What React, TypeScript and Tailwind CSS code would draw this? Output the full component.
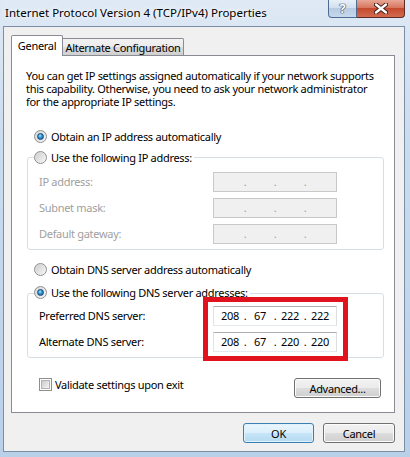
import React from "react";

const FONT = { fontFamily: '"Noto Sans", "Open Sans", sans-serif' };

function Radio({ checked }: { checked?: boolean }) {
  return (
    <span className="w-[13px] h-[13px] rounded-full border border-[#8e8f8f] bg-[linear-gradient(135deg,#d4d4d4,#f7f7f7)] flex items-center justify-center shrink-0">
      {checked ? (
        <span className="w-[7px] h-[7px] rounded-full bg-[radial-gradient(circle_at_40%_35%,#b9ecff_0%,#3aa0e0_35%,#0f4f8c_100%)] border border-[#1d4a7a]" />
      ) : (
        <span className="w-[9px] h-[9px] rounded-full bg-[linear-gradient(135deg,#cfcfcf,#f4f4f4)]" />
      )}
    </span>
  );
}

function IpField({ values, disabled }: { values?: string[]; disabled?: boolean }) {
  const segs = values ?? ["", "", "", ""];
  return (
    <div
      className={
        "w-[124px] h-[20px] border flex items-center pl-[3px] " +
        (disabled
          ? "bg-[#f0f0f0] border-[#c9c9c9] text-[#a0a0a0]"
          : "bg-white border-[#abadb3] border-b-[#e3e9ef] border-l-[#e2e3ea] border-r-[#dbdfe6] text-black")
      }
    >
      {segs.map((s, i) => (
        <React.Fragment key={i}>
          <span className="w-[26px] text-center leading-[18px]">{s}</span>
          {i < 3 && <span className="w-[4px] text-center leading-[18px]">.</span>}
        </React.Fragment>
      ))}
    </div>
  );
}

function Btn({ children, def, w }: { children: React.ReactNode; def?: boolean; w: string }) {
  return (
    <div
      className={
        w +
        " h-[20px] rounded-[3px] border flex items-center justify-center leading-none " +
        (def
          ? "border-[#3c7fb1] bg-[linear-gradient(#eaf6fd,#dbeffb_50%,#c8e6f8_50%,#b3d9f1)] shadow-[inset_0_0_0_1px_#dff2fd]"
          : "border-[#707070] bg-[linear-gradient(#f2f2f2,#ebebeb_50%,#dddddd_50%,#cfcfcf)] shadow-[inset_0_0_0_1px_#fcfcfc]")
      }
    >
      {children}
    </div>
  );
}

export default function App() {
  return (
    <div
      style={FONT}
      className="w-[410px] h-[457px] flex flex-col pl-[3px] pr-[5px] pb-[5px] bg-[linear-gradient(180deg,#dfe9f5_0%,#cadcef_30%,#b9d0e9_100%)] text-[11px] tracking-[-0.3px] text-black whitespace-nowrap"
    >
      {/* Title bar */}
      <div className="h-[26px] flex items-start justify-between shrink-0">
        <div className="pl-[2px] pt-[4px] leading-[18px] text-[11.5px] tracking-normal text-black [text-shadow:0_0_8px_#ffffff,0_0_4px_#ffffff]">
          Internet Protocol Version 4 (TCP/IPv4) Properties
        </div>
        <div className="flex items-start">
          <div className="w-[29px] h-[18px] rounded-bl-[4px] border border-t-0 border-[#4f6d92] bg-[linear-gradient(#e8eff8,#d3e0ef_45%,#b7cbe3_50%,#c6d8ec)] flex items-center justify-center">
            <span className="text-[13px] font-bold leading-none text-white [text-shadow:0_0_1px_#20344f,0_0_1px_#20344f,0_0_1px_#20344f]">?</span>
          </div>
          <div className="w-[48px] h-[18px] rounded-br-[4px] border border-t-0 border-l-0 border-[#5e2a24] bg-[linear-gradient(#e7a796,#d8765f_45%,#c34a2f_50%,#d36a4f)] flex items-center justify-center">
            <svg width="14" height="11" viewBox="0 0 14 11">
              <path d="M2 1.5 L12 9.5 M12 1.5 L2 9.5" stroke="#3b1a16" strokeWidth="4.2" strokeLinecap="round" />
              <path d="M2 1.5 L12 9.5 M12 1.5 L2 9.5" stroke="#ffffff" strokeWidth="2.4" strokeLinecap="round" />
            </svg>
          </div>
        </div>
      </div>

      {/* Client area */}
      <div className="flex-1 bg-[#f0f0f0] border border-[#7b8ea6] flex flex-col pl-[7px] pr-[9px] pt-[8px]">
        {/* Tabs */}
        <div className="h-[20px] flex items-end">
          <div className="relative z-10 h-[21px] -mb-[1px] w-[52px] bg-white border border-b-0 border-[#898c95] rounded-t-[2px] flex items-start justify-center pt-[2px] leading-[15px]">
            General
          </div>
          <div className="h-[17px] w-[121px] border border-l-0 border-b-0 border-[#898c95] rounded-tr-[2px] bg-[linear-gradient(#f2f2f2,#ebebeb_50%,#dddddd_50%,#cfcfcf)] flex items-center justify-center leading-[15px]">
            Alternate Configuration
          </div>
        </div>

        {/* Panel */}
        <div className="h-[358px] bg-white border border-[#898c95] flex flex-col pl-[14px] pr-[10px] pt-[13px]">
          <div className="leading-[13px]">
            You can get IP settings assigned automatically if your network supports
            <br />
            this capability. Otherwise, you need to ask your network administrator
            <br />
            for the appropriate IP settings.
          </div>

          <div className="mt-[22px] ml-[8px] flex items-center gap-[4px] h-[13px]">
            <Radio checked />
            <span className="leading-[13px]">Obtain an IP address automatically</span>
          </div>

          {/* Group 1 */}
          <div className="relative mt-[14px] ml-[1px] border border-[#d5dfe5] rounded-[3px] pt-[14px] pb-[5px] pl-[11px] flex flex-col gap-[6px]">
            <div className="absolute -top-[7px] left-[6px] bg-white pr-[2px] flex items-center gap-[4px] h-[13px]">
              <Radio />
              <span className="leading-[13px]">Use the following IP address:</span>
            </div>
            {["IP address:", "Subnet mask:", "Default gateway:"].map((l) => (
              <div key={l} className="flex items-center h-[20px]">
                <span className="w-[174px] text-[#a0a0a0]">{l}</span>
                <IpField disabled />
              </div>
            ))}
          </div>

          <div className="mt-[13px] ml-[8px] flex items-center gap-[4px] h-[13px]">
            <Radio />
            <span className="leading-[13px]">Obtain DNS server address automatically</span>
          </div>

          {/* Group 2 */}
          <div className="relative mt-[17px] ml-[1px] border border-[#d5dfe5] rounded-[3px] pt-[12px] pb-[5px] pl-[11px] flex flex-col gap-[6px]">
            <div className="absolute -top-[8px] left-[6px] bg-white pr-[2px] flex items-center gap-[4px] h-[13px]">
              <Radio checked />
              <span className="leading-[13px]">Use the following DNS server addresses:</span>
            </div>
            <div className="flex items-center h-[20px]">
              <span className="w-[174px]">Preferred DNS server:</span>
              <IpField values={["208", "67", "222", "222"]} />
            </div>
            <div className="flex items-center h-[20px]">
              <span className="w-[174px]">Alternate DNS server:</span>
              <IpField values={["208", "67", "220", "220"]} />
            </div>
            <div className="absolute left-[175px] top-[3px] w-[145px] h-[64px] border-[5px] border-[#e0131f] pointer-events-none" />
          </div>

          {/* Validate + Advanced */}
          <div className="mt-[20px] flex items-start justify-between pl-[13px] pr-[3px]">
            <div className="flex items-center gap-[3px] h-[13px]">
              <span className="w-[13px] h-[13px] border border-[#8e8f8f] bg-white flex items-center justify-center">
                <span className="w-[9px] h-[9px] bg-[linear-gradient(135deg,#cbcbcb,#f6f6f6)] border border-[#b3b3b3]" />
              </span>
              <span className="leading-[13px]">Validate settings upon exit</span>
            </div>
            <Btn w="w-[87px]">Advanced...</Btn>
          </div>
        </div>

        {/* OK / Cancel */}
        <div className="mt-[10px] flex justify-end gap-[9px]">
          <Btn w="w-[71px]" def>
            OK
          </Btn>
          <Btn w="w-[72px]">Cancel</Btn>
        </div>
      </div>
    </div>
  );
}
